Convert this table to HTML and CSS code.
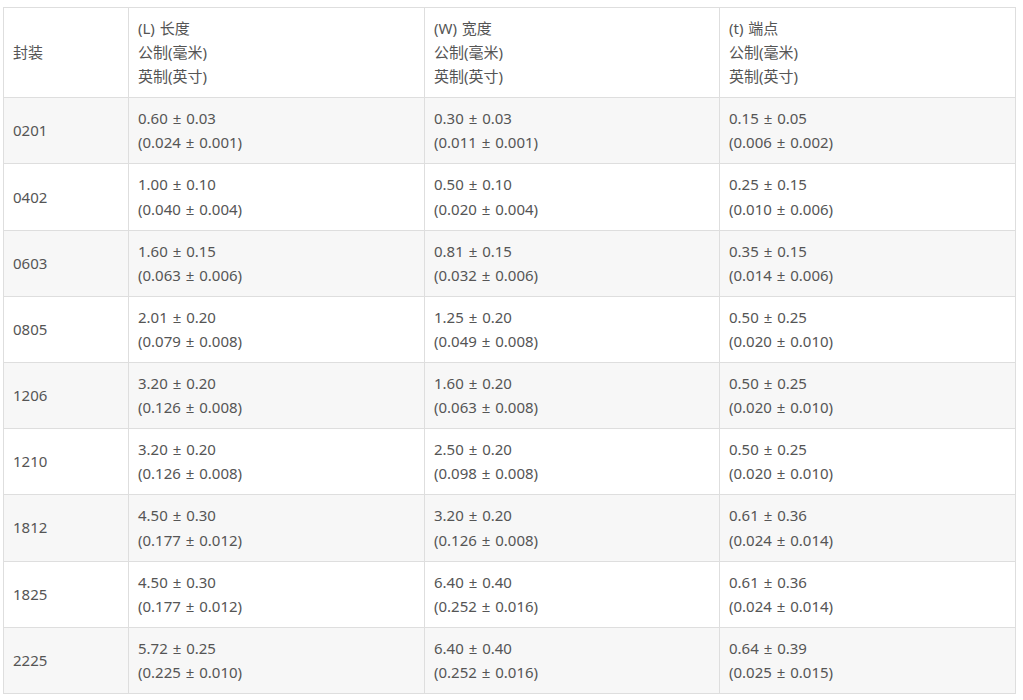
FILE: index.html
```html
<!DOCTYPE html>
<html lang="zh">
<head>
<meta charset="utf-8">
<link rel="stylesheet" href="styles.css">
</head>
<body>
<div class="wrap">
<table class="spec">
  <colgroup>
    <col class="c1"><col class="c2"><col class="c3"><col class="c4">
  </colgroup>
  <thead>
    <tr>
      <th>封装</th>
      <th>(L) 长度<br>公制(毫米)<br>英制(英寸)</th>
      <th>(W) 宽度<br>公制(毫米)<br>英制(英寸)</th>
      <th>(t) 端点<br>公制(毫米)<br>英制(英寸)</th>
    </tr>
  </thead>
  <tbody>
    <tr><td>0201</td><td>0.60 ± 0.03<br>(0.024 ± 0.001)</td><td>0.30 ± 0.03<br>(0.011 ± 0.001)</td><td>0.15 ± 0.05<br>(0.006 ± 0.002)</td></tr>
    <tr><td>0402</td><td>1.00 ± 0.10<br>(0.040 ± 0.004)</td><td>0.50 ± 0.10<br>(0.020 ± 0.004)</td><td>0.25 ± 0.15<br>(0.010 ± 0.006)</td></tr>
    <tr><td>0603</td><td>1.60 ± 0.15<br>(0.063 ± 0.006)</td><td>0.81 ± 0.15<br>(0.032 ± 0.006)</td><td>0.35 ± 0.15<br>(0.014 ± 0.006)</td></tr>
    <tr><td>0805</td><td>2.01 ± 0.20<br>(0.079 ± 0.008)</td><td>1.25 ± 0.20<br>(0.049 ± 0.008)</td><td>0.50 ± 0.25<br>(0.020 ± 0.010)</td></tr>
    <tr><td>1206</td><td>3.20 ± 0.20<br>(0.126 ± 0.008)</td><td>1.60 ± 0.20<br>(0.063 ± 0.008)</td><td>0.50 ± 0.25<br>(0.020 ± 0.010)</td></tr>
    <tr><td>1210</td><td>3.20 ± 0.20<br>(0.126 ± 0.008)</td><td>2.50 ± 0.20<br>(0.098 ± 0.008)</td><td>0.50 ± 0.25<br>(0.020 ± 0.010)</td></tr>
    <tr><td>1812</td><td>4.50 ± 0.30<br>(0.177 ± 0.012)</td><td>3.20 ± 0.20<br>(0.126 ± 0.008)</td><td>0.61 ± 0.36<br>(0.024 ± 0.014)</td></tr>
    <tr><td>1825</td><td>4.50 ± 0.30<br>(0.177 ± 0.012)</td><td>6.40 ± 0.40<br>(0.252 ± 0.016)</td><td>0.61 ± 0.36<br>(0.024 ± 0.014)</td></tr>
    <tr><td>2225</td><td>5.72 ± 0.25<br>(0.225 ± 0.010)</td><td>6.40 ± 0.40<br>(0.252 ± 0.016)</td><td>0.64 ± 0.39<br>(0.025 ± 0.015)</td></tr>
  </tbody>
</table>
</div>
</body>
</html>
```
FILE: styles.css
```css
html, body {
  margin: 0;
  padding: 0;
  background: #fff;
}
.wrap {
  padding: 7px 0 0 3px;
}
.spec {
  border-collapse: collapse;
  table-layout: fixed;
  width: 1012px;
  font-family: "Noto Sans", "Noto Sans CJK SC", sans-serif;
  font-size: 15px;
  line-height: 24.1px;
  word-spacing: 1px;
  color: #555;
}
.c1 { width: 125px; }
.c2 { width: 296px; }
.c3 { width: 295px; }
.c4 { width: 296px; }
.spec th,
.spec td {
  border: 1px solid #dedede;
  padding: 8px 9px 9px 9px;
  text-align: left;
  font-weight: normal;
  vertical-align: middle;
}
.spec tbody tr:nth-child(odd) {
  background: #f7f7f7;
}
```
